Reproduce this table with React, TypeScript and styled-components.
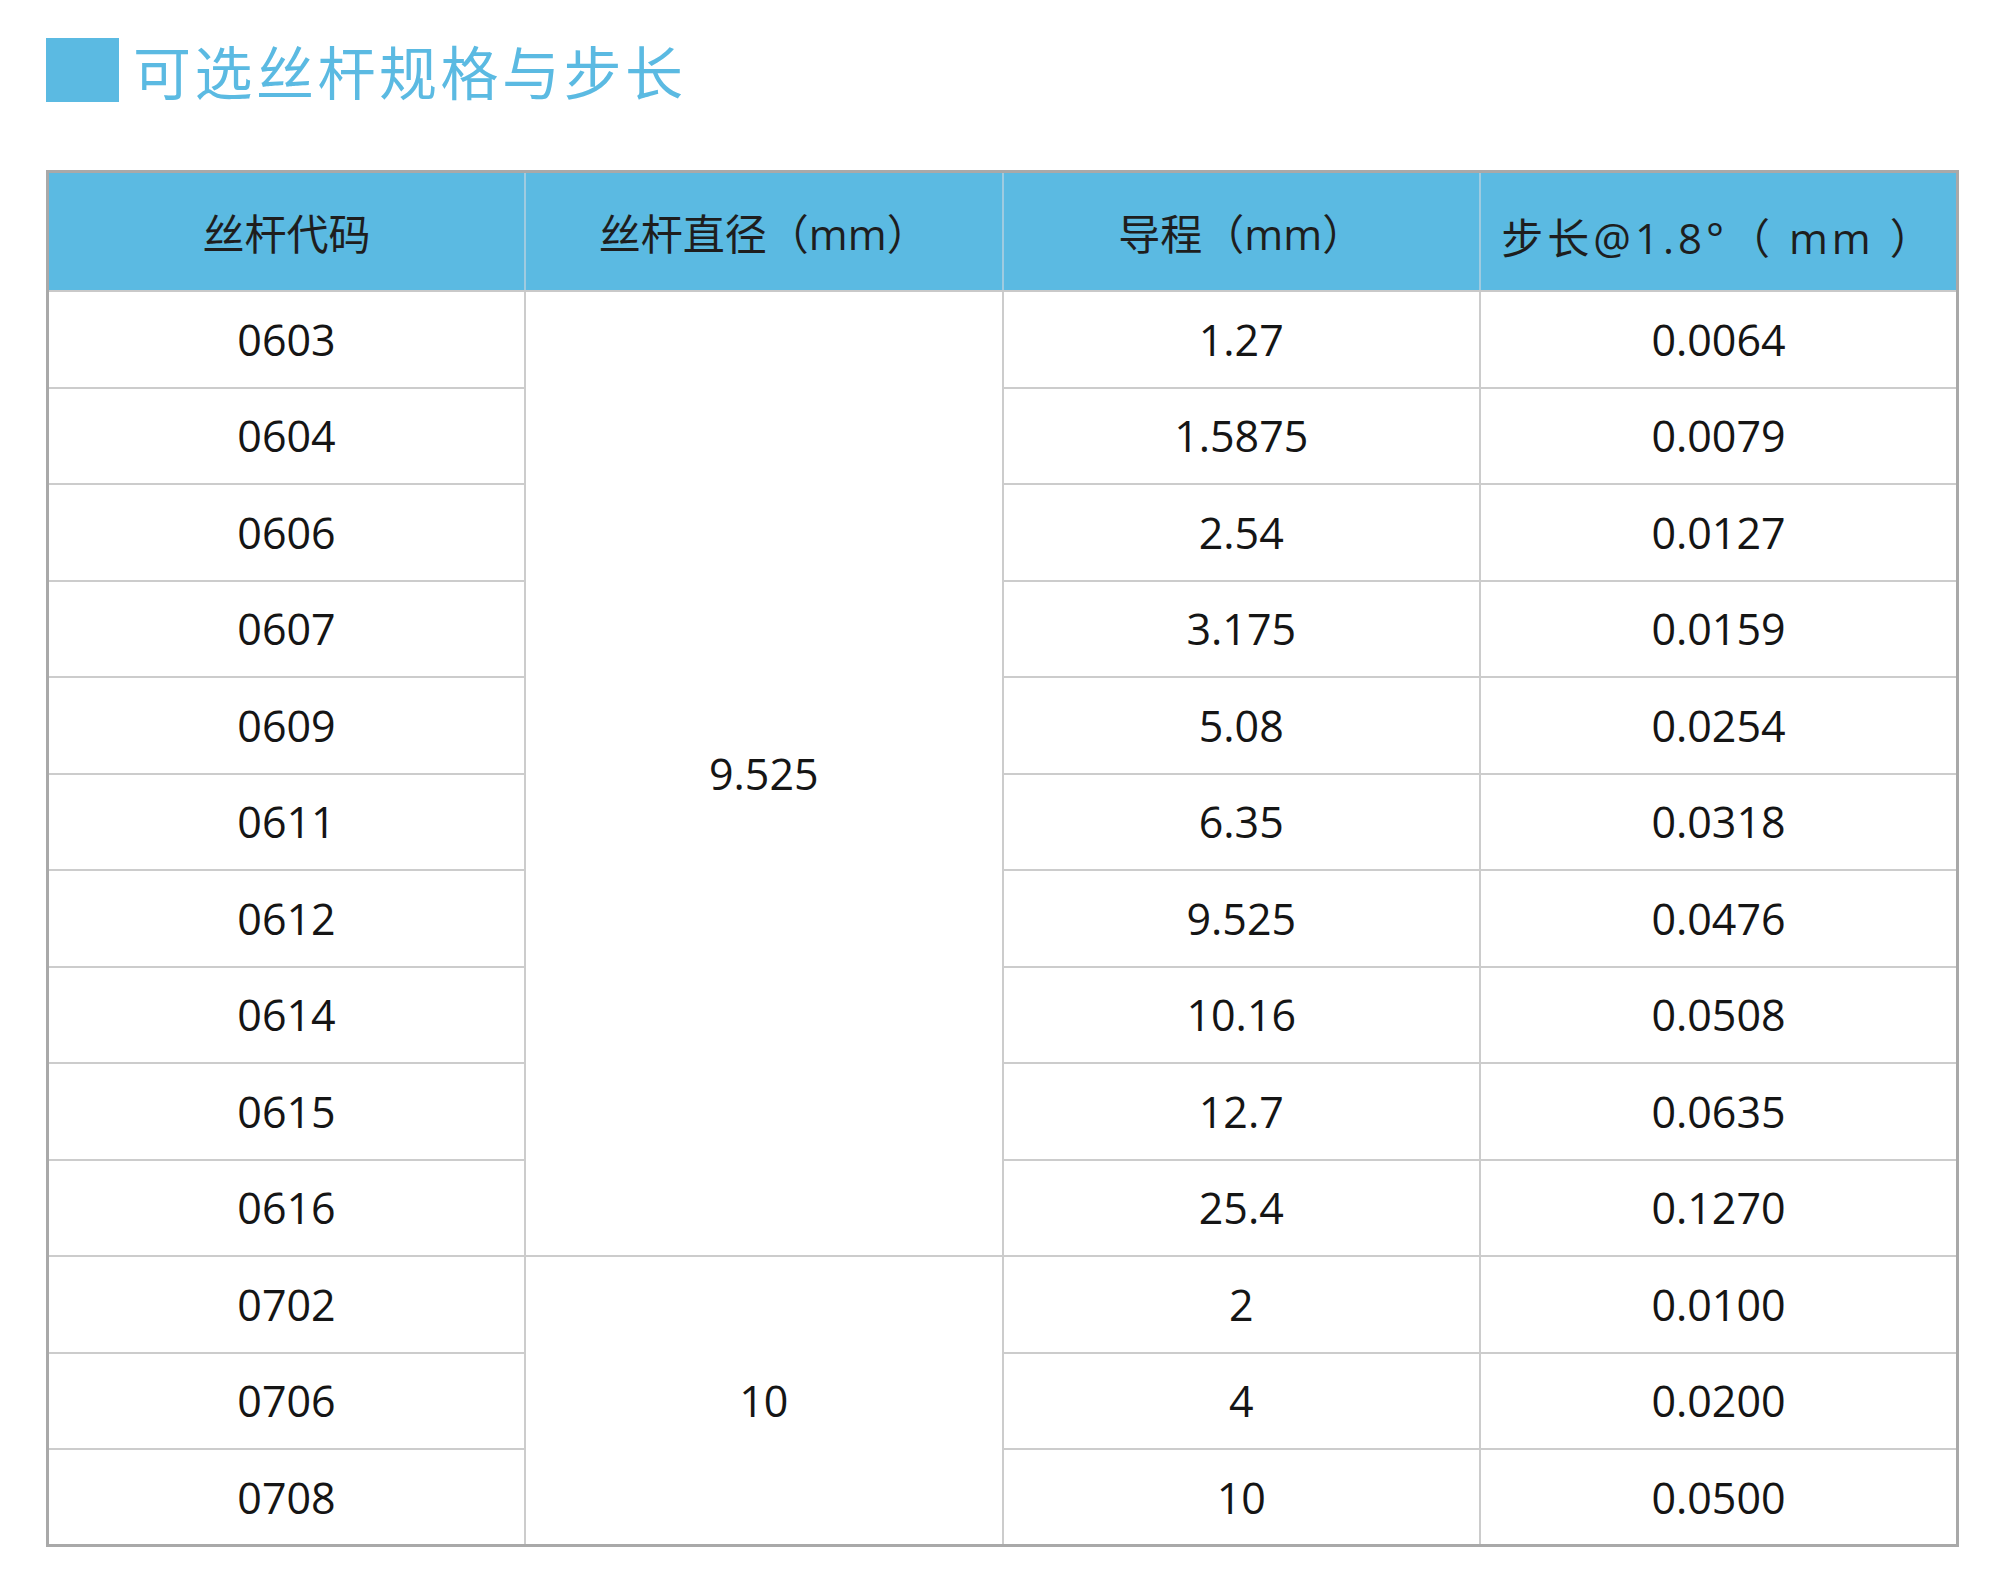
import styled, { createGlobalStyle } from "styled-components";

type Row = { code: string; lead: string; step: string };

const groups: { diameter: string; rows: Row[] }[] = [
  {
    diameter: "9.525",
    rows: [
      { code: "0603", lead: "1.27", step: "0.0064" },
      { code: "0604", lead: "1.5875", step: "0.0079" },
      { code: "0606", lead: "2.54", step: "0.0127" },
      { code: "0607", lead: "3.175", step: "0.0159" },
      { code: "0609", lead: "5.08", step: "0.0254" },
      { code: "0611", lead: "6.35", step: "0.0318" },
      { code: "0612", lead: "9.525", step: "0.0476" },
      { code: "0614", lead: "10.16", step: "0.0508" },
      { code: "0615", lead: "12.7", step: "0.0635" },
      { code: "0616", lead: "25.4", step: "0.1270" },
    ],
  },
  {
    diameter: "10",
    rows: [
      { code: "0702", lead: "2", step: "0.0100" },
      { code: "0706", lead: "4", step: "0.0200" },
      { code: "0708", lead: "10", step: "0.0500" },
    ],
  },
];

const headers = ["丝杆代码", "丝杆直径（mm）", "导程（mm）", "步长@1.8°（ mm ）"];

function App() {
  return (
    <>
      <GlobalStyle />
      <Page>
        <TitleRow>
          <TitleMark />
          <Title>可选丝杆规格与步长</Title>
        </TitleRow>

        <SpecTable>
          <colgroup>
            {headers.map((h) => (
              <col key={h} />
            ))}
          </colgroup>
          <thead>
            <tr>
              {headers.map((h, i) => (
                <HeadCell key={h} $last={i === headers.length - 1}>
                  {h}
                </HeadCell>
              ))}
            </tr>
          </thead>
          <tbody>
            {groups.map((g) =>
              g.rows.map((r, i) => (
                <BodyRow key={r.code}>
                  <Cell>{r.code}</Cell>
                  {i === 0 && <Cell rowSpan={g.rows.length}>{g.diameter}</Cell>}
                  <Cell>{r.lead}</Cell>
                  <Cell>{r.step}</Cell>
                </BodyRow>
              ))
            )}
          </tbody>
        </SpecTable>
      </Page>
    </>
  );
}

export default App;

const GlobalStyle = createGlobalStyle`
  html, body {
    margin: 0;
    padding: 0;
    background: #ffffff;
  }
  body {
    font-family: "Open Sans", "Noto Sans CJK SC", sans-serif;
  }
`;

const Page = styled.div`
  width: 2000px;
  height: 1593px;
  padding: 38px 0 0 46px;
  box-sizing: border-box;
`;

const TitleRow = styled.div`
  display: flex;
  align-items: center;
  gap: 14px;
  height: 64px;
`;

const TitleMark = styled.div`
  width: 73px;
  height: 64px;
  background: #5bbae2;
`;

const Title = styled.h1`
  margin: 0;
  font-family: "Noto Sans CJK SC", sans-serif;
  font-weight: 400;
  font-size: 58px;
  letter-spacing: 3.5px;
  line-height: 64px;
  color: #5bbae2;
`;

const SpecTable = styled.table`
  margin-top: 68px;
  width: 1913px;
  table-layout: fixed;
  border-collapse: collapse;
  border: 3px solid #a9a9a9;

  col {
    width: 25%;
  }
`;

const HeadCell = styled.th<{ $last?: boolean }>`
  height: ${(p) => (p.$last ? "109px" : "117px")};
  padding: ${(p) => (p.$last ? "8px 0 0" : "0")};
  background: #5bbae2;
  border-right: ${(p) => (p.$last ? "3px solid #a9a9a9" : "2px solid #9fcbe0")};
  border-bottom: 2px solid #c9c9c9;
  font-family: "Open Sans", "Noto Sans CJK SC", sans-serif;
  font-weight: 400;
  font-size: 42px;
  letter-spacing: ${(p) => (p.$last ? "4px" : "0")};
  color: #1e1e1e;
  text-align: center;
  vertical-align: middle;
`;

const BodyRow = styled.tr`
  height: 96.5px;
`;

const Cell = styled.td`
  padding: 0;
  border: 2px solid #cccccc;
  font-family: "Open Sans", "Noto Sans CJK SC", sans-serif;
  font-weight: 500;
  font-size: 43px;
  color: #151515;
  text-align: center;
  vertical-align: middle;
`;
